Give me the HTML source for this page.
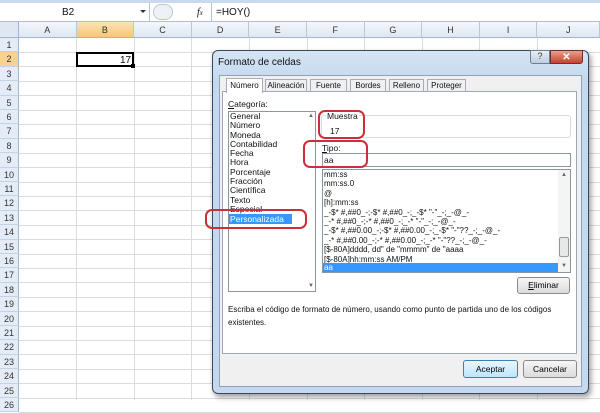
<!DOCTYPE html><html><head><meta charset="utf-8"><style>
*{margin:0;padding:0;box-sizing:border-box}
body{width:600px;height:400px;overflow:hidden;background:#fff;font-family:"Liberation Sans",sans-serif;position:relative}
.a{position:absolute}
.t{font-size:8.5px;color:#111;white-space:nowrap}
.rh{position:absolute;left:0;width:19px;height:14.4px;background:#e4ecf7;border-bottom:1px solid #c5d2e3;border-right:1px solid #9eb6ce;font-size:9px;text-align:center;line-height:14px;color:#333}
.ch{position:absolute;top:22px;height:16px;background:linear-gradient(#f4f7fb,#dfe7f2);border-right:1px solid #b8c8dc;border-bottom:1px solid #9eb6ce;font-size:9px;text-align:center;line-height:16px;color:#333}
.vl{position:absolute;top:38px;height:362px;width:1px;background:#dadcdd}
.hl{position:absolute;left:19px;width:581px;height:1px;background:#dadcdd}
.btn{position:absolute;border:1px solid #8a8a8a;border-radius:3px;background:linear-gradient(#f6f6f6,#dcdcdc);font-size:8.5px;text-align:center}
.red{position:absolute;border:2px solid #c8303a;border-radius:7px}
.tab{position:absolute;top:79px;height:13px;border:1px solid #aab;background:#eef0f3;font-size:8px;text-align:center;line-height:11px;color:#111;white-space:nowrap}
</style></head><body>
<div class="a" style="left:0;top:0;width:600px;height:3px;background:#c9d9ee"></div>
<div class="a" style="left:0;top:3px;width:600px;height:19px;background:#fff;border-bottom:1px solid #b0bfd3"></div>
<div class="a" style="left:0;top:3px;width:150px;height:19px;border-right:1px solid #b0bfd3"></div>
<div class="a t" style="left:62px;top:7px;font-size:10px">B2</div>
<div class="a" style="left:140px;top:10px;border-left:3px solid transparent;border-right:3px solid transparent;border-top:3px solid #333"></div>
<div class="a" style="left:153px;top:4px;width:20px;height:16px;border-radius:8px;border:1px solid #b9c6d8;background:#eef2f7"></div>
<div class="a t" style="left:197px;top:7px;font-style:italic;font-family:'Liberation Serif',serif;font-size:10px">f<span style="font-size:7px">x</span></div>
<div class="a" style="left:211px;top:3px;width:1px;height:19px;background:#b0bfd3"></div>
<div class="a t" style="left:216px;top:7px;font-size:10px">=HOY()</div>
<div class="a" style="left:0;top:22px;width:19px;height:16px;background:#dfe7f2;border-right:1px solid #9eb6ce;border-bottom:1px solid #9eb6ce"></div>
<div class="ch" style="left:19px;width:57.6px">A</div>
<div class="ch" style="left:76.6px;width:57.6px;background:linear-gradient(#fbe3b6,#f6c676)">B</div>
<div class="ch" style="left:134.2px;width:57.6px">C</div>
<div class="ch" style="left:191.8px;width:57.6px">D</div>
<div class="ch" style="left:249.4px;width:57.6px">E</div>
<div class="ch" style="left:307px;width:57.6px">F</div>
<div class="ch" style="left:364.6px;width:57.6px">G</div>
<div class="ch" style="left:422.2px;width:57.6px">H</div>
<div class="ch" style="left:479.8px;width:57.6px">I</div>
<div class="ch" style="left:537.4px;width:62.6px">J</div>
<div id="rows"></div>
<div class="vl" style="left:76px"></div><div class="vl" style="left:134px"></div><div class="vl" style="left:191px"></div><div class="vl" style="left:249px"></div><div class="vl" style="left:307px"></div><div class="vl" style="left:364px"></div><div class="vl" style="left:422px"></div><div class="vl" style="left:479px"></div><div class="vl" style="left:537px"></div>
<script>
var h='';for(var i=1;i<=26;i++){var y=38+(i-1)*14.4;h+='<div class="rh" style="top:'+y+'px;'+(i==2?'background:#f8d290;':'')+'">'+i+'</div><div class="hl" style="top:'+(y+14)+'px"></div>';}
document.getElementById('rows').innerHTML=h;
</script>
<div class="a" style="left:76px;top:52px;width:58px;height:15px;border:2px solid #000"></div>
<div class="a t" style="left:120px;top:55px;font-size:10px">17</div>
<div class="a" style="left:131px;top:64px;width:4px;height:4px;background:#000"></div>

<div class="a" style="left:212px;top:50px;width:377px;height:344px;border:1px solid #3a4a5c;border-radius:6px;background:linear-gradient(#d6e5f5 0,#c4d8ee 30px,#c4d8ee);box-shadow:2px 3px 6px rgba(0,0,0,.4)"></div>
<div class="a t" style="left:218px;top:57px;font-size:10px">Formato de celdas</div>
<div class="a" style="left:530px;top:50px;width:20px;height:14px;border:1px solid #6d7f94;border-radius:0 0 0 3px;background:linear-gradient(#e8eef5,#bfcddd);font-size:9px;text-align:center;color:#333">?</div>
<div class="a" style="left:550px;top:50px;width:33px;height:14px;border:1px solid #6d3030;border-radius:0 0 3px 0;background:linear-gradient(#e9a08e,#c8412d);font-size:10px;font-weight:bold;text-align:center;color:#fff;line-height:13px">✕</div>
<div class="a" style="left:219px;top:75px;width:363px;height:312px;background:#f0f0f0;border:1px solid #8da2bb"></div>
<div class="a" style="left:222px;top:91px;width:355px;height:263px;background:#fff;border:1px solid #9aa7b6"></div>
<div class="tab" style="left:226px;top:78px;width:37px;height:15px;background:#fff;border-bottom:none;line-height:13px">Número</div>
<div class="tab" style="left:265px;width:42px">Alineación</div>
<div class="tab" style="left:310px;width:37px">Fuente</div>
<div class="tab" style="left:350px;width:36px">Bordes</div>
<div class="tab" style="left:389px;width:35px">Relleno</div>
<div class="tab" style="left:427px;width:39px">Proteger</div>
<div class="a t" style="left:228px;top:99px"><u>C</u>ategoría:</div>
<div class="a" style="left:228px;top:111px;width:88px;height:181px;border:1px solid #8a95a3;background:#fff"></div>
<div class="a t" style="left:230px;top:112px;line-height:9.3px;font-size:8.5px">General<br>Número<br>Moneda<br>Contabilidad<br>Fecha<br>Hora<br>Porcentaje<br>Fracción<br>Científica<br>Texto<br>Especial</div>
<div class="a t" style="left:229px;top:214px;width:63px;height:10px;background:#3399ff;color:#fff;padding-left:1px;line-height:10px">Personalizada</div>
<div class="a t" style="left:308px;top:113px;font-size:6px;color:#666">▲</div>
<div class="a t" style="left:308px;top:283px;font-size:6px;color:#666">▼</div>
<div class="a" style="left:321px;top:115px;width:250px;height:23px;border:1px solid #d6dbe0;border-radius:3px"></div>
<div class="a t" style="left:326px;top:111px;background:#fff;padding:0 1px">Muestra</div>
<div class="a t" style="left:330px;top:126px">17</div>
<div class="a t" style="left:322px;top:143px"><u>T</u>ipo:</div>
<div class="a" style="left:322px;top:153px;width:249px;height:14px;border:1px solid #8a95a3;background:#fff"></div>
<div class="a t" style="left:324px;top:155px">aa</div>
<div class="a" style="left:322px;top:169px;width:249px;height:104px;border:1px solid #8a95a3;background:#fff"></div>
<div class="a t" style="left:324px;top:170px;line-height:9.4px;font-size:8px">mm:ss<br>mm:ss.0<br>@<br>[h]:mm:ss<br>_-$* #,##0_-;-$* #,##0_-;_-$* "-"_-;_-@_-<br>_-* #,##0_-;-* #,##0_-;_-* "-"_-;_-@_-<br>_-$* #,##0.00_-;-$* #,##0.00_-;_-$* "-"??_-;_-@_-<br>_-* #,##0.00_-;-* #,##0.00_-;_-* "-"??_-;_-@_-<br>[$-80A]dddd, dd" de "mmmm" de "aaaa<br>[$-80A]hh:mm:ss AM/PM</div>
<div class="a t" style="left:323px;top:263px;width:235px;height:9px;background:#3399ff;color:#fff;font-size:8px;line-height:9px;padding-left:1px">aa</div>
<div class="a" style="left:558px;top:170px;width:12px;height:102px;background:#f4f4f4"></div>
<div class="a" style="left:559px;top:237px;width:10px;height:20px;border:1px solid #999;border-radius:2px;background:#e8e8e8"></div>
<div class="a t" style="left:561px;top:172px;font-size:6px;color:#666">▲</div>
<div class="a t" style="left:561px;top:263px;font-size:6px;color:#666">▼</div>
<div class="btn" style="left:517px;top:277px;width:53px;height:17px;line-height:15px"><u>E</u>liminar</div>
<div class="a t" style="left:228px;top:303px;line-height:13px;font-size:8px">Escriba el código de formato de número, usando como punto de partida uno de los códigos<br>existentes.</div>
<div class="btn" style="left:463px;top:360px;width:55px;height:18px;line-height:16px;border-color:#3c7fb1;background:linear-gradient(#eaf6fd,#bee6fd)">Aceptar</div>
<div class="btn" style="left:523px;top:360px;width:54px;height:18px;line-height:16px">Cancelar</div>
<div class="red" style="left:318px;top:110px;width:47px;height:29px"></div>
<div class="red" style="left:303px;top:140px;width:65px;height:28px"></div>
<div class="red" style="left:205px;top:209px;width:102px;height:20px"></div>
</body></html>
